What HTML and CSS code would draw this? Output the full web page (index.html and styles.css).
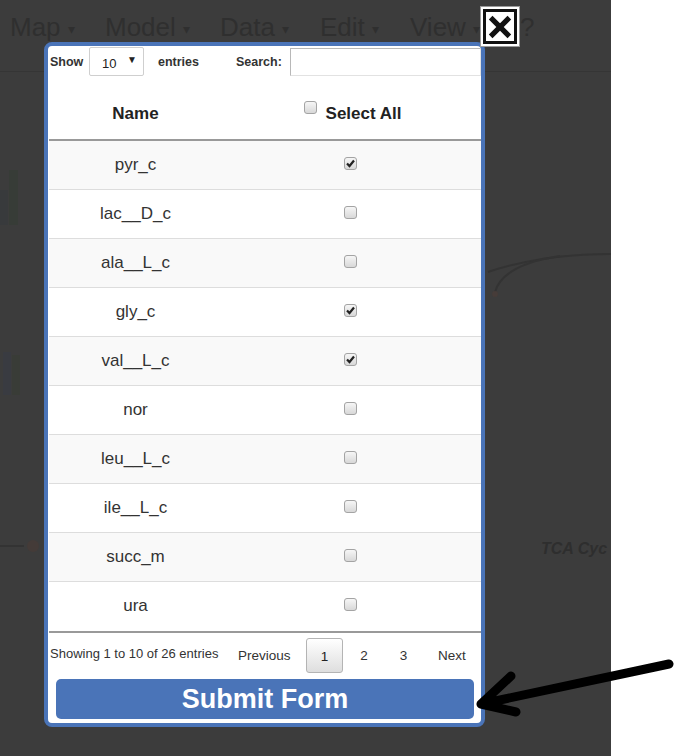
FILE: index.html
```html
<!DOCTYPE html>
<html>
<head>
<meta charset="utf-8">
<link rel="stylesheet" href="styles.css">
</head>
<body>
<div class="app">
  <nav class="menubar">
    <span class="menu m-map">Map <i class="caret">▾</i></span>
    <span class="menu m-model">Model <i class="caret">▾</i></span>
    <span class="menu m-data">Data <i class="caret">▾</i></span>
    <span class="menu m-edit">Edit <i class="caret">▾</i></span>
    <span class="menu m-view">View <i class="caret">▾</i></span>
    <span class="menu">?</span>
  </nav>
  <svg class="diagram" width="611" height="684" viewBox="0 72 611 684">
    <rect x="0" y="190" width="8" height="35" fill="#383a3c"/>
    <rect x="9" y="170" width="9" height="55" fill="#373c37"/>
    <rect x="3" y="352" width="8" height="43" fill="#393b41"/>
    <rect x="12" y="355" width="8" height="40" fill="#393c37"/>
    <path d="M488 272 C 530 258, 570 254, 611 254" stroke="#333" stroke-width="2" fill="none"/>
    <path d="M495 292 C 500 275, 520 262, 560 256" stroke="#333" stroke-width="2" fill="none"/>
    <circle cx="495" cy="294" r="3" fill="#463c39"/>
    <path d="M0 546 L 24 546" stroke="#333" stroke-width="2"/>
    <circle cx="33" cy="546" r="6" fill="#443b38"/>
    <text x="541" y="554" class="tca">TCA Cyc</text>
  </svg>

  <div class="modal">
    <div class="controls">
      <label class="ctl-show">Show</label>
      <div class="select"><span>10</span><span class="arrow">▼</span></div>
      <label class="ctl-entries">entries</label>
      <label class="ctl-search">Search:</label>
      <input class="search" type="text">
    </div>
    <table class="grid">
      <thead>
        <tr>
          <th class="c-name">Name</th>
          <th class="c-sel"><span class="cb"></span>Select All</th>
        </tr>
      </thead>
      <tbody>
        <tr><td>pyr_c</td><td><span class="cb on"><svg viewBox="0 0 13 13"><path d="M3 6.5 L5.5 9 L10 3.5" /></svg></span></td></tr>
        <tr><td>lac__D_c</td><td><span class="cb"></span></td></tr>
        <tr><td>ala__L_c</td><td><span class="cb"></span></td></tr>
        <tr><td>gly_c</td><td><span class="cb on"><svg viewBox="0 0 13 13"><path d="M3 6.5 L5.5 9 L10 3.5" /></svg></span></td></tr>
        <tr><td>val__L_c</td><td><span class="cb on"><svg viewBox="0 0 13 13"><path d="M3 6.5 L5.5 9 L10 3.5" /></svg></span></td></tr>
        <tr><td>nor</td><td><span class="cb"></span></td></tr>
        <tr><td>leu__L_c</td><td><span class="cb"></span></td></tr>
        <tr><td>ile__L_c</td><td><span class="cb"></span></td></tr>
        <tr><td>succ_m</td><td><span class="cb"></span></td></tr>
        <tr><td>ura</td><td><span class="cb"></span></td></tr>
      </tbody>
    </table>
    <div class="footer">
      <span class="info">Showing 1 to 10 of 26 entries</span>
      <div class="pager">
        <span class="pg prev">Previous</span>
        <span class="pg num current">1</span>
        <span class="pg num two">2</span>
        <span class="pg num three">3</span>
        <span class="pg next">Next</span>
      </div>
    </div>
    <button class="submit">Submit Form</button>
  </div>

  <div class="close">
    <div class="close-inner">
      <svg viewBox="0 0 30 30" width="30" height="30"><path d="M5 5 L25 25 M25 5 L5 25"/></svg>
    </div>
  </div>
</div>
<svg class="pointer" width="676" height="756" viewBox="0 0 676 756">
  <path d="M669 664 L481 704 M481 704 L511 676 M481 704 L516 712" />
</svg>
</body>
</html>
```
FILE: styles.css
```css
html, body {
  margin: 0;
  padding: 0;
  background: #ffffff;
  width: 676px;
  height: 756px;
  overflow: hidden;
  font-family: "Liberation Sans", Arial, sans-serif;
}

.app {
  position: relative;
  width: 611px;
  height: 756px;
  background: #3c3c3c;
  overflow: hidden;
}

.menubar {
  display: flex;
  align-items: center;
  height: 72px;
  padding: 0 0 16px 10px;
  border-bottom: 1px solid #353535;
  box-sizing: border-box;
  color: #2f2f2f;
  font-size: 26px;
}

.menu { white-space: nowrap; }
.m-map { width: 95px; }
.m-model { width: 115px; }
.m-data { width: 100px; }
.m-edit { width: 90px; }
.m-view { width: 110px; }

.menu .caret {
  font-style: normal;
  font-size: 14px;
  vertical-align: middle;
}

.diagram {
  position: absolute;
  left: 0;
  top: 72px;
}

.tca {
  font: italic bold 16px "Liberation Sans", Arial, sans-serif;
  fill: #2e2e2e;
}

.modal {
  position: absolute;
  left: 44px;
  top: 42px;
  width: 441px;
  height: 685px;
  box-sizing: border-box;
  border: 4px solid #4a74b8;
  border-radius: 8px;
  background: #ffffff;
  display: flex;
  flex-direction: column;
  padding: 0 0 0 1px;
  color: #333;
}

.controls {
  display: flex;
  flex: none;
  align-items: center;
  height: 30px;
  font-size: 12.5px;
  font-weight: bold;
  color: #333;
  padding-left: 1px;
}

.ctl-show { width: 39px; margin-top: 1px; }

.select {
  width: 55px;
  height: 29px;
  box-sizing: border-box;
  border: 1px solid #cfcfcf;
  border-radius: 2px;
  display: flex;
  align-items: center;
  justify-content: space-between;
  padding: 4px 6px 0 12px;
  font-weight: normal;
  font-size: 13px;
  color: #222;
  margin-top: 1px;
}

.select .arrow {
  font-size: 10px;
  margin-top: -8px;
}

.ctl-entries { margin-left: 14px; width: 78px; margin-top: 1px; }

.ctl-search { width: 54px; margin-top: 1px; }

.search {
  flex: 1;
  height: 28px;
  box-sizing: border-box;
  border: 1px solid #e2e2e2;
  border-top-color: #b8b8b8;
  border-left-color: #b8b8b8;
  margin: 1px 0 0 0;
  padding: 0;
  outline: none;
}

.grid {
  flex: none;
  width: 100%;
  border-collapse: collapse;
  table-layout: fixed;
}

.grid th {
  height: 64px;
  font-size: 17px;
  font-weight: bold;
  color: #222;
  border-bottom: 2px solid #999;
  vertical-align: bottom;
  padding: 0 0 15px 0;
  box-sizing: border-box;
}

.grid th.c-name { width: 173px; }

.grid th.c-sel { text-align: center; padding-right: 0; padding-left: 2px; }

.grid th .cb {
  vertical-align: 5px;
  margin-right: 9px;
}

.grid td {
  height: 49px;
  padding: 0;
  text-align: center;
  font-size: 17px;
  color: #333;
  border-top: 1px solid #dddddd;
  box-sizing: border-box;
}

.grid tbody tr:first-child td { border-top: none; }

.grid tbody tr:nth-child(odd) td { background: #f9f9f9; }

.grid tbody tr:last-child td { border-bottom: 2px solid #999; height: 51px; }

.cb {
  display: inline-block;
  width: 13px;
  height: 13px;
  box-sizing: border-box;
  border: 1px solid #a4a4a4;
  border-radius: 3px;
  background: linear-gradient(#f6f6f6, #d8d8d8);
  vertical-align: middle;
  position: relative;
}

.grid td .cb { margin-left: -3px; margin-top: -4px; }

.cb svg {
  position: absolute;
  left: -1px;
  top: -1px;
  width: 13px;
  height: 13px;
}

.cb svg path {
  fill: none;
  stroke: #222;
  stroke-width: 2.2;
}

.footer {
  display: flex;
  flex: none;
  align-items: center;
  height: 43px;
  font-size: 13px;
  color: #333;
  padding-left: 1px;
}

.info { width: 188px; margin-top: -2px; white-space: nowrap; }

.pager {
  display: flex;
  align-items: center;
  font-size: 13.5px;
  margin-top: 1px;
}

.pg { display: block; text-align: center; }

.prev { width: 68px; text-align: left; }

.num { height: 35px; line-height: 35px; }

.current {
  width: 37px;
  box-sizing: border-box;
  border: 1px solid #b4b4b4;
  border-radius: 3px;
  background: linear-gradient(#ffffff, #dedede);
  color: #222;
}

.two { width: 42px; }
.three { width: 37px; }
.next { margin-left: 16px; }

.submit {
  flex: none;
  margin: 3px 7px 0 7px;
  height: 40px;
  border: none;
  border-radius: 5px;
  background: #4a74b8;
  color: #ffffff;
  font: bold 27px "Liberation Sans", Arial, sans-serif;
  padding: 0;
  line-height: 40px;
}

.close {
  position: absolute;
  left: 480px;
  top: 6px;
  width: 40px;
  height: 41px;
  box-sizing: border-box;
  background: #ffffff;
  border: 1px solid #9a9a9a;
  padding: 2px;
}

.close-inner {
  width: 100%;
  height: 100%;
  box-sizing: border-box;
  border: 3px solid #111;
  background: #fff;
  display: flex;
  align-items: center;
  justify-content: center;
}

.close-inner svg path {
  stroke: #111;
  stroke-width: 5.5;
  fill: none;
}

.pointer {
  position: absolute;
  left: 0;
  top: 0;
  pointer-events: none;
}

.pointer path {
  stroke: #000;
  stroke-width: 9;
  stroke-linecap: round;
  stroke-linejoin: round;
  fill: none;
}
```
